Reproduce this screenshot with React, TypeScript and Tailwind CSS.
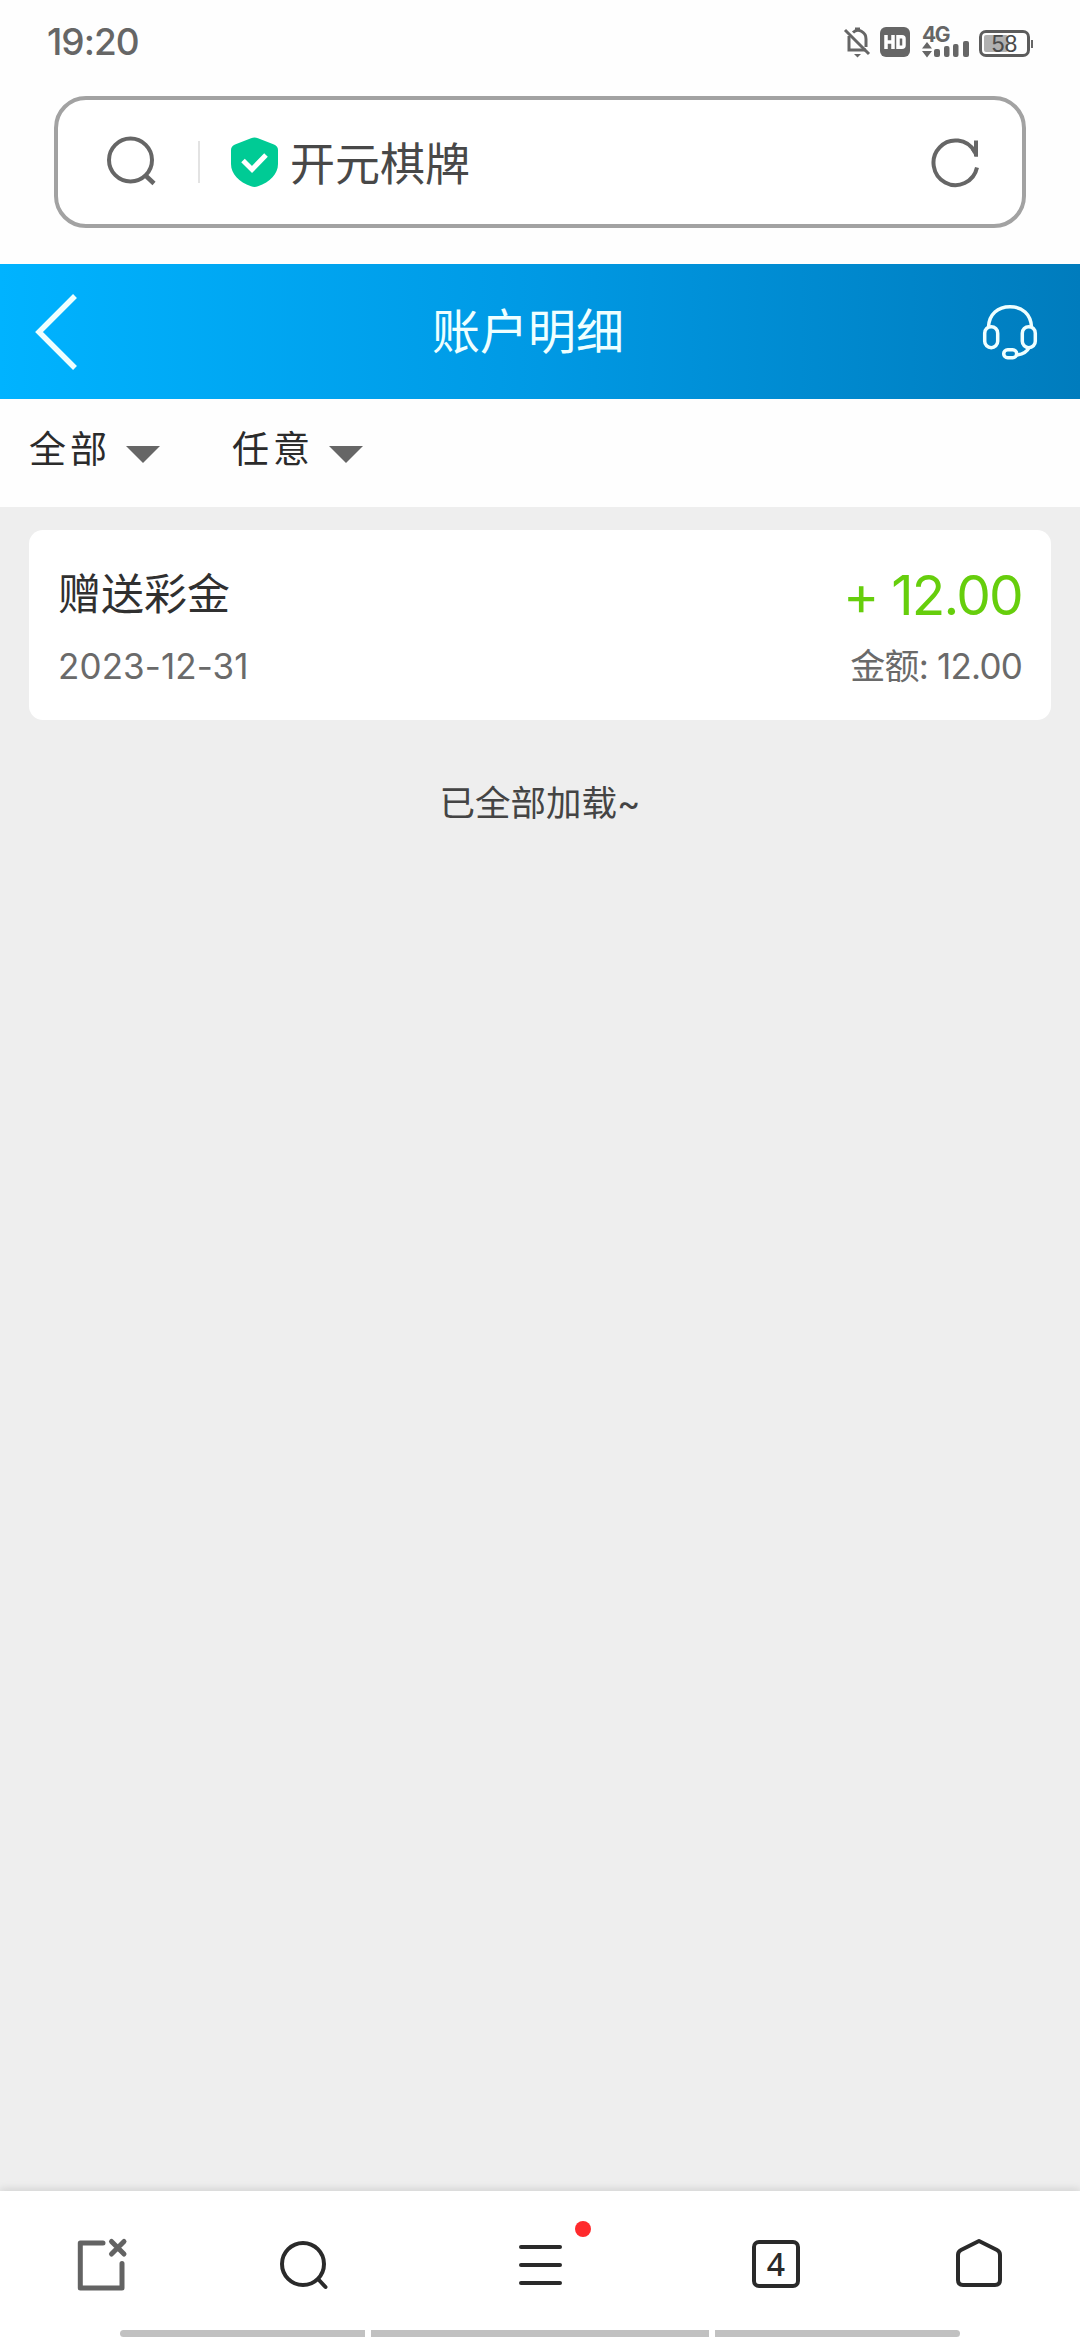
import React from "react";

function StatusBar() {
  return (
    <div className="flex h-24 shrink-0 items-start pl-[47px] text-[#666666]">
      <span className="mt-[18px] w-[110px] text-[37px] leading-[48px] font-medium tracking-[-1px]">19:20</span>
      <div className="mt-[25px] ml-auto mr-[47px] flex items-start">
        <svg width="28" height="34" viewBox="0 0 28 34" fill="none" className="mr-[9px]">
          <path d="M6 11v14h17M10 7.500C15 2.500 23 7 23 14v8" stroke="currentColor" strokeWidth="3" />
          <path d="M12 4h5M2 5l24 24" stroke="currentColor" strokeWidth="3" />
          <path d="M11 29h7l-3.500 3.500z" fill="currentColor" />
        </svg>
        <div className="mt-[2px] mr-[12px] flex h-[30px] w-[30px] items-center justify-center rounded-[6px] bg-[#666666]">
          <svg width="24" height="16" viewBox="0 0 24 16" fill="none" stroke="#fff" strokeWidth="3.500">
            <path d="M3 1v14M10 1v14M3 8h7M15 2.700h4q2 0 2 2v6.600q0 2-2 2h-4z" />
          </svg>
        </div>
        <div className="relative h-[34px] w-[47px]">
          <span className="absolute top-[1px] left-0 text-[21px] leading-[17px] font-bold tracking-[-1.500px]">4G</span>
          <svg width="47" height="34" viewBox="0 0 47 34" fill="currentColor" className="absolute top-0 left-0">
            <path d="M0 23.500L5 17l5 6.500zM0 26h10l-5 6.500z" />
            <rect x="12" y="24" width="6" height="8" rx="2" />
            <rect x="22" y="21" width="5.500" height="11" rx="2" />
            <rect x="31" y="19" width="5.500" height="13" rx="2" />
            <rect x="41" y="16" width="6" height="16" rx="2" />
          </svg>
        </div>
        <div className="mt-[5px] ml-[10px] flex items-center">
          <div className="relative flex h-[27px] w-[51px] items-center justify-center rounded-[7px] border-[3px] border-[#5c5c5c]">
            <div className="absolute top-[2px] left-[2px] h-[17px] w-[24px] rounded-[2px] bg-[#b0b0b0]" />
            <span className="relative font-['Liberation_Sans',sans-serif] text-[23px] leading-[22px] text-[#4a4a4a]">58</span>
          </div>
          <div className="ml-[1px] h-[8px] w-[2px] bg-[#666666]" />
        </div>
      </div>
    </div>
  );
}

function AddressBar() {
  return (
    <div className="mr-[54px] ml-[54px] flex h-[132px] shrink-0 items-center rounded-[32px] border-4 border-[#a2a2a2] bg-white pl-[47px] pr-[42px] text-[#666666]">
      <svg width="54" height="54" viewBox="0 0 54 54" fill="none" stroke="currentColor" strokeWidth="4">
        <circle cx="25.500" cy="25" r="21.500" />
        <path d="M40.500 40.500l8.500 8" strokeWidth="4.500" />
      </svg>
      <div className="ml-[39px] h-[42px] w-[2px] bg-[#e3e3e3]" />
      <svg width="47" height="50" viewBox="0 0 47 50" fill="none" className="ml-[31px]">
        <path d="M20 1.300q3.500-1.500 7 0L43 7.500q4 1.500 4 5.500v14c0 10-8 18-20 22.300q-3.500 1.200-7 0C8 45 0 37 0 27V13q0-4 4-5.500z" fill="#00cb95" />
        <path d="M12 23.500l9 9L35 18" stroke="#fff" strokeWidth="5" />
      </svg>
      <span className="ml-[12px] mt-[5px] text-[45px] leading-[54px] text-[#484848]">开元棋牌</span>
      <svg width="50" height="52" viewBox="0 0 50 52" fill="none" stroke="currentColor" strokeWidth="4" className="ml-auto">
        <path d="M47 31.500A22 22.300 0 1 1 44.500 15.500" />
        <path d="M46 4.500v16" />
        <path d="M41 13.500l4 7h3v-7z" fill="currentColor" stroke="none" />
      </svg>
    </div>
  );
}

function Header() {
  return (
    <header className="mt-9 flex h-[135px] shrink-0 items-center bg-linear-to-r from-[#00b3ff] via-[#0099e4] to-[#007cbd] pl-[35px] pr-[42px] text-[#efffff]">
      <svg width="44" height="78" viewBox="0 0 44 78" fill="none" className="shrink-0">
        <path d="M40 3L4 39l36 36" stroke="currentColor" strokeWidth="5.500" />
      </svg>
      <h1 className="ml-[353px] mt-[1px] text-[48px] leading-[60px] font-normal">账户明细</h1>
      <svg width="56" height="56" viewBox="0 0 56 56" fill="none" stroke="currentColor" strokeWidth="3.500" className="ml-auto">
        <path d="M6.500 23C7 10 16 2.700 28 2.700S49 10 49.500 23" />
        <rect x="2.700" y="22.700" width="13" height="21" rx="6.500" />
        <rect x="40.300" y="22.700" width="13" height="21" rx="6.500" />
        <path d="M47 43.500c-1.500 4-6 6.500-12 7.500" />
        <rect x="21.700" y="45.700" width="13" height="8" rx="4" />
      </svg>
    </header>
  );
}

function Filter({ label }: { label: string }) {
  return (
    <button className="flex items-center">
      <span className="w-[97px] text-left text-[37px] leading-[48px] tracking-[4px] text-[#2b2b2b]">{label}</span>
      <svg width="34" height="17" viewBox="0 0 34 17" fill="#666666" className="mt-[8px]">
        <path d="M0 0h34L17 17z" />
      </svg>
    </button>
  );
}

function Record() {
  return (
    <article className="mx-[29px] mt-[23px] flex h-[190px] justify-between rounded-[14px] bg-white px-[29px]">
      <div className="flex flex-col">
        <span className="mt-[38px] text-[43px] leading-[52px] text-[#303030]">赠送彩金</span>
        <span className="mt-[24px] text-[35px] leading-[44px] tracking-[0.100px] text-[#6a6a6a]">2023-12-31</span>
      </div>
      <div className="flex flex-col items-end">
        <span className="mt-[35px] text-[55px] leading-[60px] tracking-[-1.800px] text-[#66ce0c]">+ 12.00</span>
        <span className="mt-[19px] text-[35px] leading-[44px] tracking-[-0.800px] text-[#6a6a6a]">金额: 12.00</span>
      </div>
    </article>
  );
}

function BottomBar() {
  return (
    <footer className="relative flex h-[149px] shrink-0 flex-col bg-white text-[#2a2a2a] shadow-[0_-2px_8px_rgba(0,0,0,0.12)]">
      <nav className="mt-[44px] flex h-[60px] items-start pl-[73px]">
        <svg width="60" height="60" viewBox="73 2235 60 60" fill="none" stroke="#636363" strokeWidth="5" strokeLinecap="round" strokeLinejoin="round">
          <path d="M103 2243H80.300V2288H122V2263.500" />
          <path d="M111.500 2241.500l12.500 12.500M124 2241.500l-12.500 12.500" />
        </svg>
        <svg width="60" height="60" viewBox="273 2235 60 60" fill="none" stroke="currentColor" strokeWidth="4" strokeLinecap="round" className="ml-[140px]">
          <circle cx="303" cy="2264" r="21" />
          <path d="M318.500 2279.500l7 7.500" />
        </svg>
        <div className="relative ml-[177px] flex h-[60px] w-[60px] flex-col items-center gap-[14px] pt-[10px]">
          <i className="h-1 w-[43px] rounded-full bg-[#2a2a2a]" />
          <i className="h-1 w-[43px] rounded-full bg-[#2a2a2a]" />
          <i className="h-1 w-[43px] rounded-full bg-[#2a2a2a]" />
          <i className="absolute -top-[14px] left-[65px] h-4 w-4 rounded-full bg-[#ff2a2c]" />
        </div>
        <div className="ml-[182px] mt-[5px] flex h-12 w-12 items-center justify-center rounded-[7px] border-4 border-[#2a2a2a] font-['Noto_Sans',sans-serif] text-[32px] leading-none font-medium">
          4
        </div>
        <svg width="60" height="60" viewBox="949 2235 60 60" fill="none" stroke="currentColor" strokeWidth="4" strokeLinejoin="round" className="ml-[149px]">
          <path d="M979 2241l18 9q3 1.500 3 5v25q0 5-5 5h-32q-5 0-5-5v-25q0-3.500 3-5z" />
        </svg>
      </nav>
      <div className="mx-[120px] mt-[35px] flex h-[7px] gap-[6px]">
        <div className="w-[245px] rounded-l-full bg-[#c1c1c1]" />
        <div className="flex-1 bg-[#c1c1c1]" />
        <div className="w-[245px] rounded-r-full bg-[#c1c1c1]" />
      </div>
    </footer>
  );
}

export default function App() {
  return (
    <div className="flex h-[2340px] w-[1080px] flex-col overflow-hidden bg-[#fefefe] font-[Inter,'Noto_Sans_CJK_SC',sans-serif]">
      <StatusBar />
      <AddressBar />
      <Header />
      <div className="flex h-[108px] shrink-0 items-start gap-[72px] pl-[29px] pt-[27px]">
        <Filter label="全部" />
        <Filter label="任意" />
      </div>
      <main className="flex flex-1 flex-col bg-[#eeeeee]">
        <Record />
        <p className="mt-[60px] text-center text-[35.500px] leading-[48px] text-[#444444]">已全部加载~</p>
      </main>
      <BottomBar />
    </div>
  );
}
